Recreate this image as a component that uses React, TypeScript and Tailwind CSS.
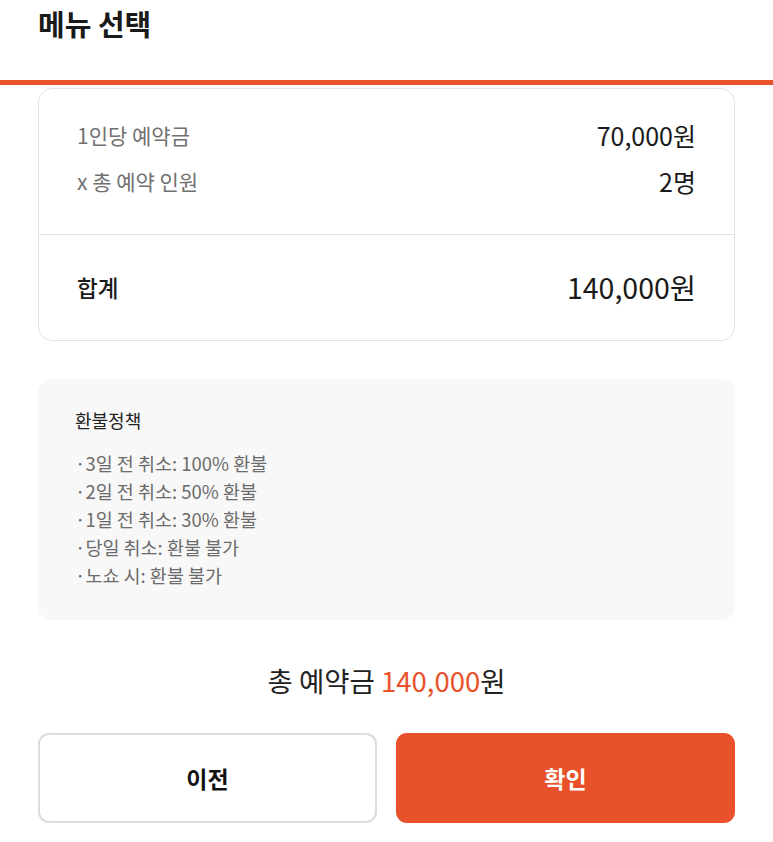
import React from "react";

const font = { fontFamily: '"Noto Sans CJK KR", "Noto Sans", sans-serif' };

export default function App() {
  const items = [
    "·3일 전 취소: 100% 환불",
    "·2일 전 취소: 50% 환불",
    "·1일 전 취소: 30% 환불",
    "·당일 취소: 환불 불가",
    "·노쇼 시: 환불 불가",
  ];
  return (
    <div className="w-[773px] h-[842px] bg-white overflow-hidden" style={font}>
      <div className="h-[85px] border-b-[5px] border-[#e8512a] px-[38px] flex items-start">
        <h1 className="text-[29px] font-bold text-[#1a1a1a] leading-none mt-[9px]">메뉴 선택</h1>
      </div>
      <div className="px-[38px] pt-[3px]">
        <div className="border border-[#e2e2e2] rounded-[14px]">
          <div className="px-[38px] pt-[30px] pb-[35px] flex flex-col gap-[12px]">
            <div className="flex justify-between items-center h-[34px]">
              <span className="text-[21px] text-[#707070]">1인당 예약금</span>
              <span className="text-[25px] text-[#1a1a1a]">70,000원</span>
            </div>
            <div className="flex justify-between items-center h-[34px]">
              <span className="text-[21px] text-[#707070]">x 총 예약 인원</span>
              <span className="text-[25px] text-[#1a1a1a]">2명</span>
            </div>
          </div>
          <div className="border-t border-[#e2e2e2] px-[38px] h-[106px] flex justify-between items-center">
            <span className="text-[22.5px] text-[#1a1a1a] font-medium">합계</span>
            <span className="text-[28.5px] text-[#1a1a1a]">140,000원</span>
          </div>
        </div>
        <div className="mt-[38px] bg-[#f8f8f8] rounded-[14px] px-[37px] pt-[27px] h-[241px]">
          <div className="text-[18px] text-[#222] leading-[28px]">환불정책</div>
          <div className="mt-[15px] flex flex-col">
            {items.map((t) => (
              <div key={t} className="text-[18.5px] text-[#6b6b6b] leading-[28px]">{t}</div>
            ))}
          </div>
        </div>
        <div className="mt-[42px] text-center text-[27.5px] text-[#222] leading-[36px]">
          총 예약금 <span className="text-[#e8512a]">140,000</span>원
        </div>
        <div className="mt-[35px] grid grid-cols-2 gap-[19px]">
          <button className="h-[90px] rounded-[11px] border-2 border-[#dcdcdc] bg-white text-[23px] font-bold text-[#111]">이전</button>
          <button className="h-[90px] rounded-[11px] bg-[#e8512a] text-[23px] font-bold text-white">확인</button>
        </div>
      </div>
    </div>
  );
}
